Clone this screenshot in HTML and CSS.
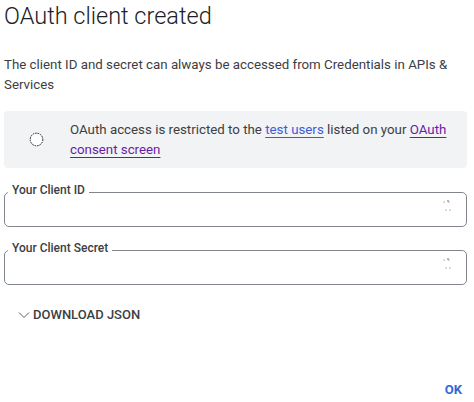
FILE: index.html
```html
<!DOCTYPE html>
<html>
<head>
<meta charset="utf-8">
<link rel="stylesheet" href="styles.css">
</head>
<body>
<div class="dialog">
  <h1 class="title">OAuth client created</h1>
  <p class="desc">The client ID and secret can always be accessed from Credentials in APIs &amp; Services</p>
  <div class="notice">
    <div class="notice-icon">
      <svg width="15" height="15" viewBox="0 0 15 15"><circle cx="7.5" cy="7.5" r="6.3" fill="#fff" stroke="#202124" stroke-width="1" stroke-dasharray="1.6 0.9"/></svg>
    </div>
    <p class="notice-text">OAuth access is restricted to the <a class="link" href="#">test users</a> listed on your <a class="link visited" href="#">OAuth consent screen</a></p>
  </div>
  <fieldset class="field">
    <legend class="legend">Your Client ID</legend>
    <div class="field-row">
      <svg class="copy" width="14" height="16" viewBox="0 0 14 16"><circle cx="2" cy="3" r="0.6" fill="#5f6368"/><circle cx="6" cy="2" r="0.7" fill="#3c4043"/><circle cx="7" cy="3" r="0.6" fill="#5f6368"/><circle cx="4" cy="11" r="0.6" fill="#5f6368"/><circle cx="8" cy="11" r="0.6" fill="#5f6368"/></svg>
    </div>
  </fieldset>
  <fieldset class="field">
    <legend class="legend">Your Client Secret</legend>
    <div class="field-row">
      <svg class="copy" width="14" height="16" viewBox="0 0 14 16"><circle cx="2" cy="3" r="0.6" fill="#5f6368"/><circle cx="6" cy="2" r="0.7" fill="#3c4043"/><circle cx="7" cy="3" r="0.6" fill="#5f6368"/><circle cx="4" cy="11" r="0.6" fill="#5f6368"/><circle cx="8" cy="11" r="0.6" fill="#5f6368"/></svg>
    </div>
  </fieldset>
  <div class="download">
    <svg width="12" height="8" viewBox="0 0 12 8"><path d="M1 1.5 L6 6.5 L11 1.5" fill="none" stroke="#5f6368" stroke-width="1"/></svg>
    <span>DOWNLOAD JSON</span>
  </div>
  <div class="actions">
    <button class="ok">OK</button>
  </div>
</div>
</body>
</html>
```
FILE: styles.css
```css
html, body {
  margin: 0;
  padding: 0;
  background: #fff;
}
body {
  font-family: Roboto, "Liberation Sans", Arial, sans-serif;
  color: #3c4043;
}
.dialog {
  width: 474px;
  height: 402px;
  box-sizing: border-box;
  padding: 0 7px 0 4px;
  display: flex;
  flex-direction: column;
}
.title {
  margin: 2px 0 0 0;
  font-size: 23.5px;
  font-weight: 300;
  line-height: 28px;
  color: #202124;
}
.desc {
  margin: 25px 0 0 0;
  font-size: 13.3px;
  line-height: 20px;
  color: #3c4043;
}
.notice {
  margin-top: 16px;
  background: #f1f3f4;
  border-radius: 4px;
  height: 57px;
  box-sizing: border-box;
  display: flex;
  align-items: center;
  padding: 0 14px 0 25px;
}
.notice-icon {
  width: 41px;
  flex: none;
  display: flex;
}
.notice-text {
  margin: 0;
  font-size: 13.3px;
  line-height: 20px;
  color: #3c4043;
  padding-top: 1px;
}
.link {
  color: #3b5bdb;
  text-decoration: underline;
  text-underline-offset: 3px;
}
.link.visited {
  color: #681da8;
}
.field {
  margin: 15px 0 0 0;
  padding: 0 10px 0 0;
  border: 1px solid #80868b;
  border-radius: 5px;
  height: 44px;
  box-sizing: border-box;
  min-width: 0;
}
.field + .field {
  margin-top: 14px;
}
.legend {
  font-size: 12px;
  font-weight: 500;
  color: #3c4043;
  padding: 0 4px 4px 4px;
  margin-left: 3px;
  line-height: 14px;
}
.field-row {
  display: flex;
  justify-content: flex-end;
  height: 100%;
  margin-top: -2px;
}
.download {
  margin: 22px 0 0 14px;
  display: flex;
  align-items: center;
  gap: 3px;
  font-size: 13px;
  font-weight: 500;
  color: #3c4043;
}
.actions {
  margin-top: auto;
  display: flex;
  justify-content: flex-end;
  padding-bottom: 4px;
}
.ok {
  background: none;
  border: none;
  font-family: inherit;
  font-size: 13px;
  font-weight: 700;
  color: #3367d6;
  padding: 0 5px;
  line-height: 16px;
}
```
